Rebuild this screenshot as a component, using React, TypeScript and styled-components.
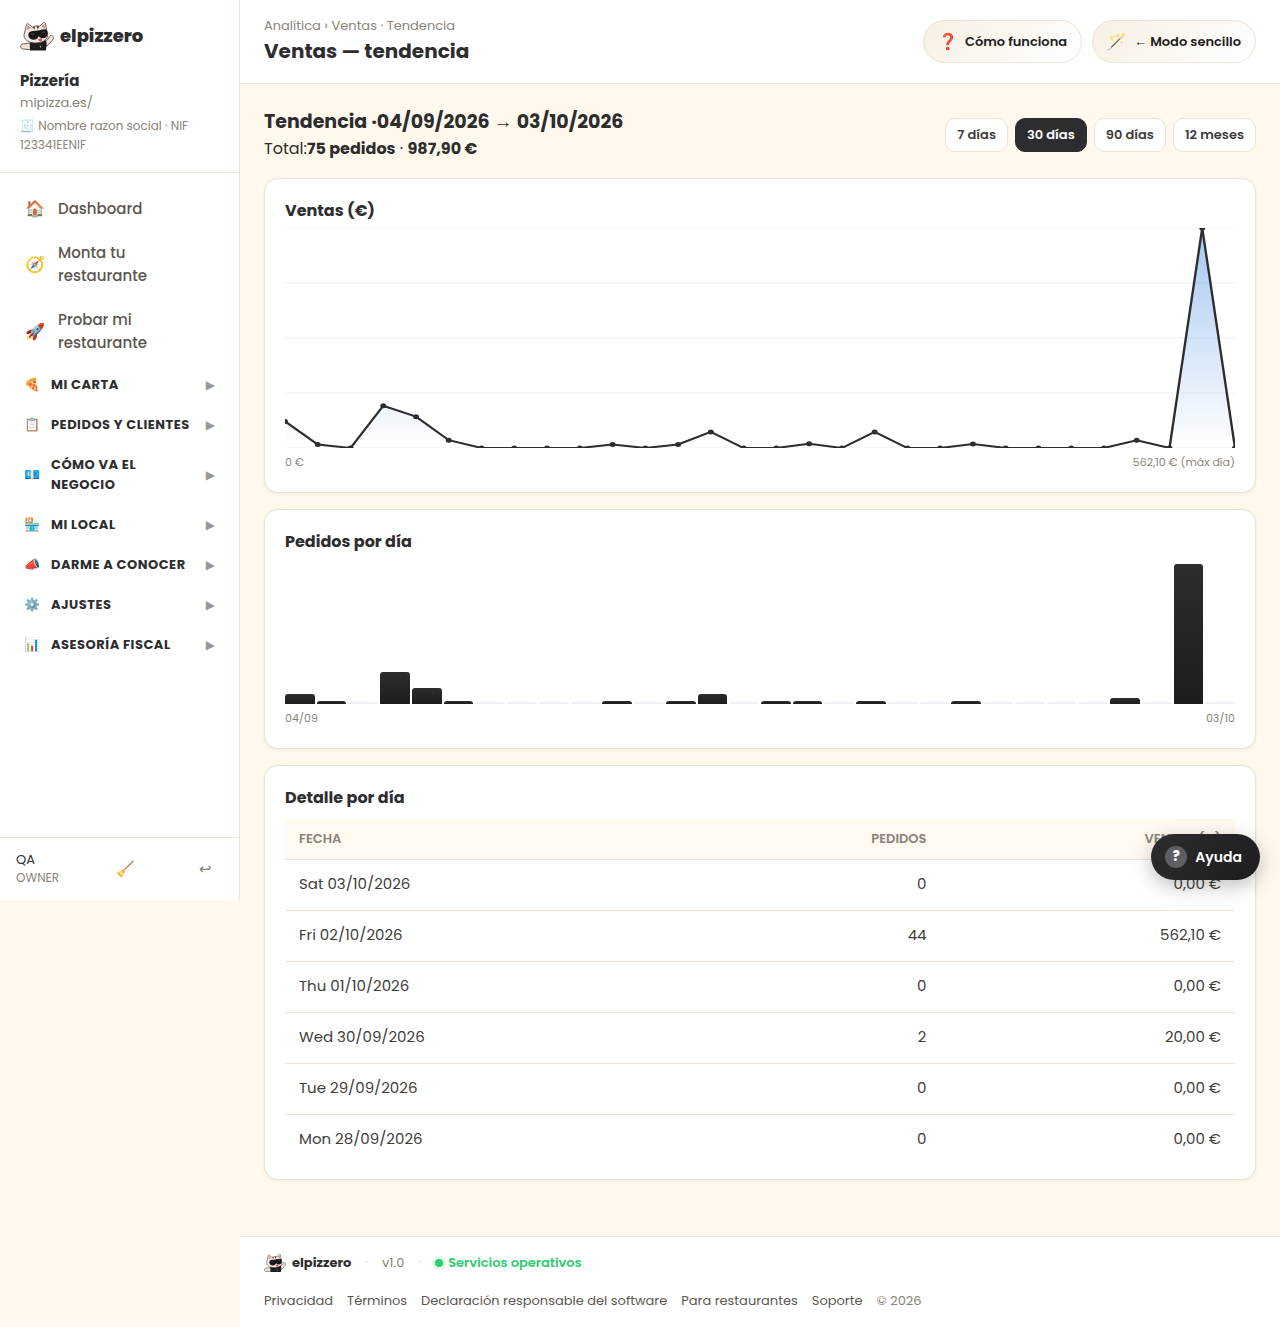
import React from "react";
import styled, { createGlobalStyle } from "styled-components";

const ink = "#2d2d2f";
const muted = "#8a8378";
const line = "#ebe3d5";
const cream = "#fff8ec";
const viewportHeight = "min(100vh, 900px)";

const GlobalStyle = createGlobalStyle`
  *, *::before, *::after { box-sizing: border-box; }
  body {
    margin: 0;
    background: ${cream};
    color: ${ink};
    font-family: Poppins, "Liberation Sans", sans-serif;
    font-size: 15px;
    line-height: 24px;
  }
  h1, h2, h3, p { margin: 0; }
  a { color: inherit; text-decoration: none; }
  button { font: inherit; color: inherit; cursor: pointer; }
`;

const Shell = styled.div`
  display: grid;
  grid-template-columns: 240px minmax(0, 1fr);
  align-items: start;
`;

const Sidebar = styled.aside`
  display: flex;
  flex-direction: column;
  height: ${viewportHeight};
  background: #fff;
  border-right: 1px solid ${line};
`;

const Business = styled.div`
  padding: 20px 20px 18px;
  border-bottom: 1px solid ${line};
`;

const Brand = styled.a<{ $small?: boolean }>`
  display: flex;
  width: fit-content;
  align-items: center;
  gap: 6px;
  font-size: ${(p) => (p.$small ? 13 : 18)}px;
  font-weight: ${(p) => (p.$small ? 700 : 800)};
  line-height: ${(p) => (p.$small ? 20 : 32)}px;
`;

const BusinessName = styled.div`
  margin-top: 18px;
  font-size: 15px;
  font-weight: 700;
  line-height: 22px;
`;

const BusinessMeta = styled.div<{ $legal?: boolean }>`
  margin-top: ${(p) => (p.$legal ? 4 : 1)}px;
  color: ${muted};
  font-size: ${(p) => (p.$legal ? 12 : 13)}px;
  line-height: 19px;
`;

const Nav = styled.nav`
  flex: 1;
  min-height: 0;
  padding: 14px 12px;
  overflow: hidden;
`;

const NavLink = styled.a`
  display: flex;
  align-items: center;
  gap: 12px;
  padding: 10px 13px;
  margin-bottom: 1px;
  color: #5c564e;
  font-size: 15px;
  font-weight: 500;
  line-height: 23px;
`;

const NavIcon = styled.span`
  width: 21px;
  flex: none;
  font-size: 16px;
`;

const Section = styled.button`
  display: flex;
  align-items: center;
  gap: 10px;
  width: 100%;
  padding: 10px 12px;
  border: 0;
  background: none;
  text-align: left;
  font-size: 13px;
  font-weight: 700;
  letter-spacing: 0.5px;
  line-height: 20px;
`;

const SectionIcon = styled.span`
  width: 17px;
  flex: none;
  font-size: 13px;
`;

const SectionLabel = styled.span`
  flex: 1;
`;

const Caret = styled.span`
  color: #98989c;
  font-family: "DejaVu Sans", sans-serif;
  font-size: 12px;
  font-weight: 400;
  letter-spacing: 0;
`;

const UserBar = styled.div`
  display: flex;
  align-items: center;
  justify-content: space-between;
  padding: 13px 19px 13px 16px;
  border-top: 1px solid ${line};
  font-size: 13px;
  line-height: 18px;
`;

const Role = styled.div`
  color: ${muted};
  font-size: 12px;
`;

const IconButton = styled.button`
  width: 28px;
  padding: 0;
  border: 0;
  background: none;
  color: ${muted};
  font-size: 15px;
`;

const Column = styled.div`
  display: flex;
  flex-direction: column;
  min-width: 0;
`;

const TopBar = styled.header`
  display: flex;
  align-items: center;
  justify-content: space-between;
  padding: 16px 24px;
  background: #fff;
  border-bottom: 1px solid ${line};
`;

const Crumbs = styled.div`
  color: ${muted};
  font-size: 13px;
  line-height: 20px;
`;

const PageTitle = styled.h1`
  font-size: 20px;
  font-weight: 700;
  line-height: 31px;
`;

const Actions = styled.div<{ $gap: number }>`
  display: flex;
  gap: ${(p) => p.$gap}px;
`;

const Pill = styled.button`
  display: flex;
  align-items: center;
  gap: 7px;
  height: 43px;
  padding: 0 14px;
  border: 1px solid ${line};
  border-radius: 22px;
  background: linear-gradient(135deg, #f7efe2, #fff);
  color: #1d1d1f;
  font-size: 13px;
  font-weight: 600;
`;

const PillIcon = styled.span`
  font-size: 16px;
`;

const Main = styled.main`
  display: flex;
  flex-direction: column;
  gap: 16px;
  padding: 24px 24px 56px;
`;

const Intro = styled.div`
  display: flex;
  align-items: center;
  justify-content: space-between;
`;

const IntroTitle = styled.h2`
  font-size: 19px;
  font-weight: 700;
  line-height: 28px;
`;

const IntroTotal = styled.p`
  font-size: 16px;
  line-height: 26px;

  strong { font-weight: 700; }
`;

const Range = styled.button<{ $active?: boolean }>`
  height: 34px;
  padding: 0 11px;
  border: 1px solid ${(p) => (p.$active ? ink : line)};
  border-radius: 10px;
  background: ${(p) => (p.$active ? ink : "#fff")};
  color: ${(p) => (p.$active ? "#fff" : "#3f3c39")};
  font-size: 13px;
  font-weight: 600;
`;

const Card = styled.section<{ $table?: boolean }>`
  padding: 20px 20px ${(p) => (p.$table ? 14 : 20)}px;
  border: 1px solid ${line};
  border-radius: 14px;
  background: #fff;
  box-shadow: 0 1px 3px rgba(90, 70, 30, 0.08);
`;

const CardTitle = styled.h3<{ $space: number }>`
  margin-bottom: ${(p) => p.$space}px;
  font-size: 16px;
  font-weight: 700;
  line-height: 24px;
`;

const Chart = styled.svg`
  display: block;
  width: 100%;
  height: 220px;
`;

const Scale = styled.div`
  display: flex;
  justify-content: space-between;
  margin-top: 4px;
  color: ${muted};
  font-size: 11px;
  line-height: 20px;
`;

const Bars = styled.div`
  display: flex;
  align-items: flex-end;
  gap: 2px;
  height: 140px;
`;

const Bar = styled.div<{ $empty: boolean }>`
  flex: 1;
  min-height: 2px;
  border-radius: 3px 3px 0 0;
  background: ${(p) => (p.$empty ? "#eef2f6" : "linear-gradient(#2d2d2f, #1d1d1f)")};
`;

const Table = styled.table`
  width: 100%;
  border-collapse: collapse;
  font-size: 15px;
`;

const HeadCell = styled.th<{ $right?: boolean; $width: number }>`
  width: ${(p) => p.$width}%;
  height: 40px;
  padding: 0 14px;
  border-bottom: 1px solid ${line};
  background: #fff9f0;
  color: ${muted};
  text-align: ${(p) => (p.$right ? "right" : "left")};
  font-size: 13px;
  font-weight: 600;
`;

const Cell = styled.td<{ $right?: boolean }>`
  height: 51px;
  padding: 0 14px 2px;
  border-bottom: 1px solid ${line};
  color: #403d3a;
  text-align: ${(p) => (p.$right ? "right" : "left")};

  tr:last-child > & { border-bottom: 0; }
`;

const Footer = styled.footer`
  padding: 16px 24px;
  border-top: 1px solid ${line};
  background: #fff;
  color: ${muted};
  font-size: 13px;
  line-height: 20px;
`;

const FooterRow = styled.div<{ $links?: boolean }>`
  display: flex;
  align-items: center;
  gap: 14px;
  margin-top: ${(p) => (p.$links ? 18 : 0)}px;

  a { color: ${(p) => (p.$links ? "#5c564e" : ink)}; }
`;

const Dot = styled.span`
  color: #d8d2c8;
`;

const Status = styled.span`
  display: flex;
  align-items: center;
  gap: 5px;
  color: #2ecc71;
  font-weight: 600;

  &::before {
    content: "";
    width: 8px;
    height: 8px;
    border-radius: 50%;
    background: #2ecc71;
    box-shadow: 0 0 0 3px rgba(46, 204, 113, 0.15);
  }
`;

const HelpButton = styled.button`
  position: absolute;
  top: calc(${viewportHeight} - 66px);
  right: 20px;
  display: flex;
  align-items: center;
  gap: 8px;
  height: 46px;
  padding: 0 18px 0 14px;
  border: 0;
  border-radius: 23px;
  background: linear-gradient(135deg, #2d2d2f, #1d1d1f);
  box-shadow: 0 6px 20px rgba(0, 0, 0, 0.25);
  color: #fff;
  font-size: 14px;
  font-weight: 600;
`;

const HelpMark = styled.span`
  width: 22px;
  border-radius: 50%;
  background: #5f5f61;
  font-size: 13px;
  font-weight: 800;
  line-height: 22px;
`;

const CatLogo = ({ width }: { width: number }) => (
  <svg width={width} viewBox="0 0 34 29" aria-hidden="true">
    <path d="M11 21 4 21.800C-.3 21.500-.6 26 3 27l9 .8z" fill="#efe3d9" stroke="#4a403c" strokeWidth=".8" />
    <path d="m24 20.500 5-4.500c-.2-2.500 2.500-3.500 4-1.700.9 1.500.2 3.500-1.500 5L27 24z" fill="#efe3d9" stroke="#4a403c" strokeWidth=".8" />
    <path d="M10 19c-.2 3-.5 6 .3 9.500h15.500c.8-3 1.400-7 .2-10z" fill="#1c1b1d" />
    <path d="M4.500 11 6.500 2.500C6.800 1.300 7.500 1.300 8.300 2L12.500 5c2.400-1 4.900-1.300 7.300-1L23.500.6c.9-.7 1.700-.3 1.800.7l1.600 8c1.400 3.500.9 6.300-1.300 8.400-4.500 4-13.500 4.200-18.200 1.200C4.400 17 3.300 14 4.500 11z" fill="#f3e9e1" stroke="#4a403c" strokeWidth=".8" />
    <path d="m6.700 8 .8-4.800L11 6zM21.200 4.500l3-2.700.9 5z" fill="#ef8581" />
    <path d="m12.500 5.400 2-.8.5 3zM16.500 4.300l2.800.1-1.500 2.800z" fill="#3a3432" />
    <path d="M8.300 12.800c0-2.500 1.700-3.600 4.200-3.900 4.500-.2 8.600-1.400 13.600-1.700l1.400 2.400c.7 4.400-1.400 6.800-4.500 6.700-2 0-3.400-.7-4.200-2-1.200 2.700-3.400 3.800-6 3.400-3-.4-4.500-2.200-4.500-4.900z" fill="#171719" />
    <path d="m11.300 12.300 3-.5M22 10.500l3-.7" stroke="#606065" strokeWidth=".8" />
    <path d="M18.300 16.600c1.300.4 2.600.1 3.700-.6.4 2.200-.2 3.500-1.500 3.600-1.200 0-2-.9-2.200-3z" fill="#e34c4a" />
    <path d="m19.500 23.500 1.700.8-.8 1.800z" fill="#d7cbc1" />
  </svg>
);

const links = [
  ["🏠", "Dashboard"],
  ["🧭", "Monta tu restaurante"],
  ["🚀", "Probar mi restaurante"],
];

const sections = [
  ["🍕", "MI CARTA"],
  ["📋", "PEDIDOS Y CLIENTES"],
  ["💶", "CÓMO VA EL NEGOCIO"],
  ["🏪", "MI LOCAL"],
  ["📣", "DARME A CONOCER"],
  ["⚙️", "AJUSTES"],
  ["📊", "ASESORÍA FISCAL"],
];

const orders = [3, 1, 0, 10, 5, 1, 0, 0, 0, 0, 1, 0, 1, 3, 0, 1, 1, 0, 1, 0, 0, 1, 0, 0, 0, 0, 2, 0, 44, 0];
const sales = [68, 9, 0, 108, 80, 20, 0, 0, 0, 0, 9, 0, 9, 41, 0, 0, 11, 0, 41, 0, 0, 10, 0, 0, 0, 0, 20, 0, 562.1, 0];

const days = [
  ["Sat 03/10/2026", "0", "0,00 €"],
  ["Fri 02/10/2026", "44", "562,10 €"],
  ["Thu 01/10/2026", "0", "0,00 €"],
  ["Wed 30/09/2026", "2", "20,00 €"],
  ["Tue 29/09/2026", "0", "0,00 €"],
  ["Mon 28/09/2026", "0", "0,00 €"],
];

const SalesChart = () => {
  const peak = Math.max(...sales);
  const points = sales.map((value, i) => [(i / (sales.length - 1)) * 800, 220 - (value / peak) * 220]);
  const path = points.map(([x, y]) => `${x},${y}`).join(" ");
  return (
    <Chart viewBox="0 0 800 220" preserveAspectRatio="none" role="img" aria-label="Ventas (€)">
      <defs>
        <linearGradient id="area" x1="0" y1="0" x2="0" y2="1">
          <stop offset="0" stopColor="#4a90e2" stopOpacity=".5" />
          <stop offset="1" stopColor="#4a90e2" stopOpacity="0" />
        </linearGradient>
      </defs>
      {[0, 55, 110, 165, 220].map((y) => (
        <line key={y} x1="0" x2="800" y1={y} y2={y} stroke="#f7f7f9" strokeWidth="2" />
      ))}
      <polygon points={`0,220 ${path} 800,220`} fill="url(#area)" />
      <polyline points={path} fill="none" stroke={ink} strokeWidth="2" />
      {points.map(([x, y]) => (
        <circle key={x} cx={x} cy={y} r="2.500" fill={ink} />
      ))}
    </Chart>
  );
};

export default function App() {
  return (
    <>
      <GlobalStyle />
      <Shell>
        <Sidebar>
          <Business>
            <Brand href="#">
              <CatLogo width={34} />
              elpizzero
            </Brand>
            <BusinessName>Pizzería</BusinessName>
            <BusinessMeta>mipizza.es/</BusinessMeta>
            <BusinessMeta $legal>🧾 Nombre razon social · NIF 123341EENIF</BusinessMeta>
          </Business>
          <Nav>
            {links.map(([icon, label]) => (
              <NavLink href="#" key={label}>
                <NavIcon>{icon}</NavIcon>
                <span>{label}</span>
              </NavLink>
            ))}
            {sections.map(([icon, label]) => (
              <Section type="button" key={label}>
                <SectionIcon>{icon}</SectionIcon>
                <SectionLabel>{label}</SectionLabel>
                <Caret>▶</Caret>
              </Section>
            ))}
          </Nav>
          <UserBar>
            <div>
              QA
              <Role>OWNER</Role>
            </div>
            <IconButton type="button" aria-label="Limpiar">🧹</IconButton>
            <IconButton type="button" aria-label="Salir">↩</IconButton>
          </UserBar>
        </Sidebar>
        <Column>
          <TopBar>
            <div>
              <Crumbs>Analítica › Ventas · Tendencia</Crumbs>
              <PageTitle>Ventas — tendencia</PageTitle>
            </div>
            <Actions $gap={10}>
              <Pill type="button">
                <PillIcon>❓</PillIcon>
                Cómo funciona
              </Pill>
              <Pill type="button">
                <PillIcon>🪄</PillIcon>
                ← Modo sencillo
              </Pill>
            </Actions>
          </TopBar>
          <Main>
            <Intro>
              <div>
                <IntroTitle>Tendencia ·04/09/2026 → 03/10/2026</IntroTitle>
                <IntroTotal>
                  Total:<strong>75 pedidos</strong> · <strong>987,90 €</strong>
                </IntroTotal>
              </div>
              <Actions $gap={7}>
                <Range type="button">7 días</Range>
                <Range type="button" $active>30 días</Range>
                <Range type="button">90 días</Range>
                <Range type="button">12 meses</Range>
              </Actions>
            </Intro>
            <Card>
              <CardTitle $space={5}>Ventas (€)</CardTitle>
              <SalesChart />
              <Scale>
                <span>0 €</span>
                <span>562,10 € (máx día)</span>
              </Scale>
            </Card>
            <Card>
              <CardTitle $space={10}>Pedidos por día</CardTitle>
              <Bars>
                {orders.map((count, i) => (
                  <Bar key={i} $empty={count === 0} style={{ height: `${(count / 44) * 100}%` }} />
                ))}
              </Bars>
              <Scale>
                <span>04/09</span>
                <span>03/10</span>
              </Scale>
            </Card>
            <Card $table>
              <CardTitle $space={9}>Detalle por día</CardTitle>
              <Table>
                <thead>
                  <tr>
                    <HeadCell $width={44}>FECHA</HeadCell>
                    <HeadCell $width={25} $right>PEDIDOS</HeadCell>
                    <HeadCell $width={31} $right>VENTAS (€)</HeadCell>
                  </tr>
                </thead>
                <tbody>
                  {days.map(([date, count, total]) => (
                    <tr key={date}>
                      <Cell>{date}</Cell>
                      <Cell $right>{count}</Cell>
                      <Cell $right>{total}</Cell>
                    </tr>
                  ))}
                </tbody>
              </Table>
            </Card>
          </Main>
          <Footer>
            <FooterRow>
              <Brand href="#" $small>
                <CatLogo width={22} />
                elpizzero
              </Brand>
              <Dot>·</Dot>
              <span>v1.0</span>
              <Dot>·</Dot>
              <Status>Servicios operativos</Status>
            </FooterRow>
            <FooterRow $links>
              <a href="#">Privacidad</a>
              <a href="#">Términos</a>
              <a href="#">Declaración responsable del software</a>
              <a href="#">Para restaurantes</a>
              <a href="#">Soporte</a>
              <span>© 2026</span>
            </FooterRow>
          </Footer>
        </Column>
      </Shell>
      <HelpButton type="button">
        <HelpMark>?</HelpMark>
        Ayuda
      </HelpButton>
    </>
  );
}
